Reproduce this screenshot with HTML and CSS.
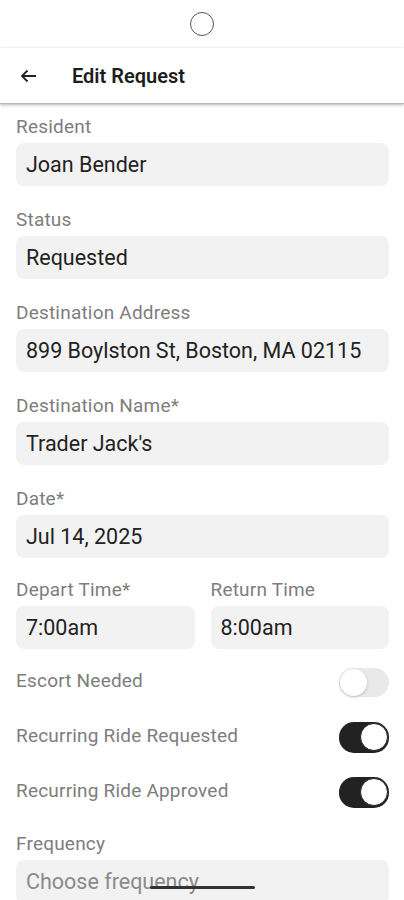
FILE: index.html
```html
<!DOCTYPE html>
<html lang="en">
<head>
    <meta charset="UTF-8">
    <title>Edit Request</title>
    <link rel="stylesheet" href="styles.css">
</head>
<body>
    <!-- Status area with camera cutout -->
    <div class="status-bar">
        <div class="camera"></div>
    </div>

    <!-- App bar -->
    <div class="app-bar">
        <svg class="back" viewBox="0 0 17 14">
            <path d="M16 7H2M7.5 1.5L2 7l5.5 5.5" />
        </svg>
        <div class="title">Edit Request</div>
    </div>

    <div class="form">
        <div class="field">
            <div class="label">Resident</div>
            <div class="input">Joan Bender</div>
        </div>
        <div class="field">
            <div class="label">Status</div>
            <div class="input">Requested</div>
        </div>
        <div class="field">
            <div class="label">Destination Address</div>
            <div class="input">899 Boylston St, Boston, MA 02115</div>
        </div>
        <div class="field">
            <div class="label">Destination Name*</div>
            <div class="input">Trader Jack's</div>
        </div>
        <div class="field tight">
            <div class="label">Date*</div>
            <div class="input">Jul 14, 2025</div>
        </div>

        <div class="field-row">
            <div class="field">
                <div class="label">Depart Time*</div>
                <div class="input">7:00am</div>
            </div>
            <div class="field">
                <div class="label">Return Time</div>
                <div class="input">8:00am</div>
            </div>
        </div>

        <div class="switch-row">
            <div class="label">Escort Needed</div>
            <div class="switch"></div>
        </div>
        <div class="switch-row">
            <div class="label">Recurring Ride Requested</div>
            <div class="switch on"></div>
        </div>
        <div class="switch-row last">
            <div class="label">Recurring Ride Approved</div>
            <div class="switch on"></div>
        </div>

        <div class="field">
            <div class="label">Frequency</div>
            <div class="input placeholder">Choose frequency</div>
        </div>
    </div>

    <div class="home-indicator"></div>
</body>
</html>
```

FILE: styles.css
```css
body {
    margin: 0;
    height: 900px;
    overflow: hidden;
    background: #fff;
    font-family: Roboto, "Noto Sans", sans-serif;
    color: #222;
}

.status-bar {
    height: 48px;
    display: flex;
    justify-content: center;
    align-items: center;
}

.camera {
    width: 22px;
    height: 22px;
    border: 1.5px solid #555;
    border-radius: 50%;
}

.app-bar {
    height: 55px;
    display: flex;
    align-items: center;
    padding-left: 20px;
    gap: 35px;
    border-bottom: 1px solid #bbb;
    box-shadow: 0 1px 3px rgba(0, 0, 0, 0.3);
}

.back {
    width: 17px;
    height: 14px;
    fill: none;
    stroke: #222;
    stroke-width: 1.8px;
}

.title {
    font-size: 20px;
    font-weight: 600;
    color: #1d1d1d;
}

.form {
    padding: 12px 15px 0 16px;
}

.field {
    margin-bottom: 23px;
}

.field.tight {
    margin-bottom: 21px;
}

.label {
    font-size: 19px;
    line-height: 22px;
    letter-spacing: 0.2px;
    color: #7d7d7d;
}

.field .label {
    margin-bottom: 5px;
}

.input {
    height: 43px;
    display: flex;
    align-items: center;
    padding-left: 10px;
    border-radius: 8px;
    background: #f2f2f2;
    font-size: 21.5px;
}

.input.placeholder {
    color: #8a8a8a;
}

.field-row {
    display: flex;
    gap: 16px;
    margin-bottom: -5px;
}

.field-row .field {
    flex: 1;
}

.switch-row {
    height: 31px;
    display: flex;
    justify-content: space-between;
    align-items: center;
    margin-bottom: 24px;
}

.switch-row .label {
    margin-top: -4px;
}

.switch-row.last {
    margin-bottom: 25px;
}

.switch {
    position: relative;
    width: 50px;
    height: 29px;
    border-radius: 15px;
    background: #e9e9e9;
}

.switch::after {
    content: "";
    position: absolute;
    left: 1px;
    top: 1px;
    width: 27px;
    height: 27px;
    border-radius: 50%;
    background: #fff;
    box-shadow: 0 1px 3px rgba(0, 0, 0, 0.2);
}

.switch.on {
    height: 31px;
    background: #222;
}

.switch.on::after {
    left: auto;
    right: 1px;
    top: 1px;
    width: 26px;
    height: 26px;
    border: 1.5px solid #222;
    box-shadow: none;
}

.home-indicator {
    position: absolute;
    left: 150px;
    top: 886px;
    width: 105px;
    height: 3px;
    border-radius: 2px;
    background: #333;
}
```
